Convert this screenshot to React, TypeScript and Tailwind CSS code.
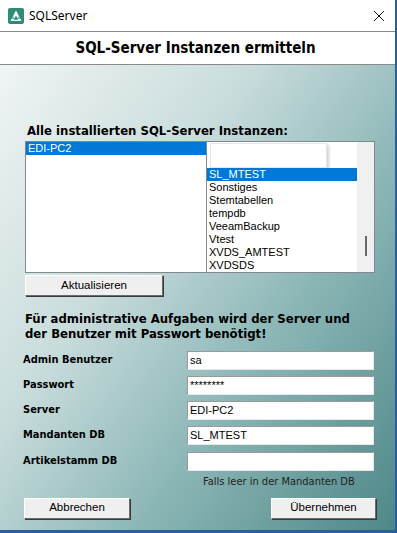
import React from "react";

const rightItems = [
  "SL_MTEST",
  "Sonstiges",
  "Stemtabellen",
  "tempdb",
  "VeeamBackup",
  "Vtest",
  "XVDS_AMTEST",
  "XVDSDS",
];

const fields = [
  { label: "Admin Benutzer", value: "sa", mt: "mt-[10px]" },
  { label: "Passwort", value: "********", mt: "mt-[6px]" },
  { label: "Server", value: "EDI-PC2", mt: "mt-[6px]" },
  { label: "Mandanten DB", value: "SL_MTEST", mt: "mt-[6px]" },
  { label: "Artikelstamm DB", value: "", mt: "mt-[7px]" },
];

function AppIcon() {
  return (
    <svg width="16" height="16" viewBox="0 0 16 16">
      <rect width="16" height="16" rx="2" fill="#2e8b74" />
      <path d="M8 2.5 L13.5 13 H2.5 Z" fill="#fff" />
      <path d="M8 7.5 L10.3 11.8 H5.7 Z" fill="#2e8b74" />
      <path d="M5.2 8.6 L6.4 10.8 H4 Z" fill="#2e8b74" />
      <path d="M10.8 8.6 L12 10.8 H9.6 Z" fill="#2e8b74" />
    </svg>
  );
}

function WinButton({ label, className }: { label: string; className?: string }) {
  return (
    <div
      className={`flex h-[21px] items-center justify-center border-t border-l border-t-white border-l-white border-r border-b border-r-[#6b6b6b] border-b-[#6b6b6b] bg-[#efefef] text-[11.5px] text-black shadow-[1px_1px_0_#3a3a3a] ${className ?? ""}`}
    >
      {label}
    </div>
  );
}

export default function App() {
  return (
    <div className="flex h-[533px] w-[397px] flex-col overflow-hidden border-r-2 border-r-[#2a5f9e] bg-white font-['Liberation_Sans',Arial,sans-serif] text-black">
      <div className="flex h-[31px] shrink-0 items-center pl-[8px] pr-[10px]">
        <AppIcon />
        <span className="ml-[5px] font-['Noto_Sans',sans-serif] text-[12px]">SQLServer</span>
        <svg className="ml-auto" width="12" height="12" viewBox="0 0 12 12">
          <path d="M1 1 L11 11 M11 1 L1 11" stroke="#111" strokeWidth="1" />
        </svg>
      </div>

      <div className="flex h-[34px] shrink-0 items-center justify-center border-y border-y-[#8a8a8a] bg-white pr-[4px]">
        <span className="font-['DejaVu_Sans',Verdana,sans-serif] text-[15px] font-bold [font-stretch:semi-condensed]">
          SQL-Server Instanzen ermitteln
        </span>
      </div>

      <div className="flex flex-1 flex-col border-b-[3px] border-b-[#2a5f9e] bg-[linear-gradient(125deg,#f0f4f4_0%,#c9dcdc_35%,#8ab5b5_65%,#4f8787_100%)] pl-[25px]">
        <div className="ml-[2px] mt-[58px] font-['DejaVu_Sans',Verdana,sans-serif] text-[13px] font-bold leading-[15px] [font-stretch:semi-condensed]">
          Alle installierten SQL-Server Instanzen:
        </div>

        <div className="mt-[3px] flex h-[132px] w-[350px] border border-[#828790] bg-white text-[11px] leading-[13px]">
          <div className="w-[181px] border-r border-r-[#828790]">
            <div className="bg-[#0078d7] pl-[2px] leading-[13px] text-white">EDI-PC2</div>
          </div>
          <div className="flex flex-1">
            <div className="flex flex-1 flex-col">
              <div className="ml-[3px] mt-[1px] h-[26px] w-[117px] border border-[#e6e6e6] bg-white shadow-[2px_2px_3px_rgba(0,0,0,0.18)]" />
              {rightItems.map((item, i) => (
                <div
                  key={item}
                  className={`pl-[2px] ${i === 0 ? "bg-[#0078d7] text-white" : ""}`}
                >
                  {item}
                </div>
              ))}
            </div>
            <div className="flex w-[17px] items-start justify-center bg-[#f0f0f0]">
              <div className="mt-[94px] h-[20px] w-[2px] bg-[#6a6a6a]" />
            </div>
          </div>
        </div>

        <WinButton label="Aktualisieren" className="mt-[2px] w-[138px]" />

        <p className="mt-[15px] font-['DejaVu_Sans',Verdana,sans-serif] text-[13px] font-bold leading-[15px] [font-stretch:semi-condensed]">
          Für administrative Aufgaben wird der Server und
          <br />
          der Benutzer mit Passwort benötigt!
        </p>

        <div className="flex flex-col">
          {fields.map((f) => (
            <div key={f.label} className={`flex h-[19px] items-center ${f.mt}`}>
              <span className="-ml-[2px] w-[164px] font-['DejaVu_Sans',Verdana,sans-serif] text-[11px] font-bold [font-stretch:semi-condensed]">
                {f.label}
              </span>
              <div className="flex h-[19px] w-[187px] items-center border border-t-[#9a9a9a] border-l-[#9a9a9a] border-r-[#e8e8e8] border-b-[#e8e8e8] bg-white pl-[2px] text-[11px]">
                {f.value}
              </div>
            </div>
          ))}
        </div>

        <div className="mt-[3px] w-[350px] pl-[178px] font-['DejaVu_Sans',Verdana,sans-serif] text-[11px] text-[#222] [font-stretch:semi-condensed]">
          Falls leer in der Mandanten DB
        </div>

        <div className="mt-[7px] flex w-[351px] justify-between">
          <WinButton label="Abbrechen" className="-ml-[1px] w-[106px]" />
          <WinButton label="Übernehmen" className="w-[105px]" />
        </div>
      </div>
    </div>
  );
}
